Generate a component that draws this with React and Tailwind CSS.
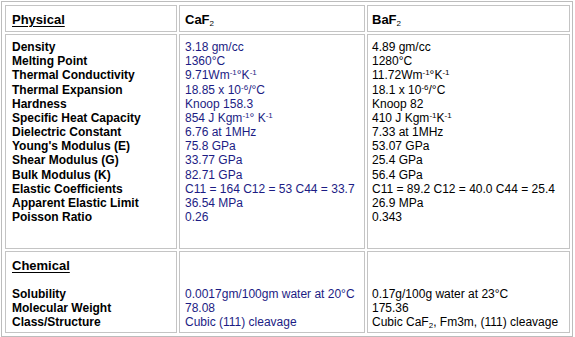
const LABELS = [
  'Density',
  'Melting Point',
  'Thermal Conductivity',
  'Thermal Expansion',
  'Hardness',
  'Specific Heat Capacity',
  'Dielectric Constant',
  "Young's Modulus (E)",
  'Shear Modulus (G)',
  'Bulk Modulus (K)',
  'Elastic Coefficients',
  'Apparent Elastic Limit',
  'Poisson Ratio',
];

const Sup = ({ children }) => <sup className="text-[8px]">{children}</sup>;

const CAF2 = [
  '3.18 gm/cc',
  '1360°C',
  <>9.71Wm<Sup>-1</Sup>°K<Sup>-1</Sup></>,
  <>18.85 x 10<Sup>-6</Sup>/°C</>,
  'Knoop 158.3',
  <>854 J Kgm<Sup>-1</Sup>° K<Sup>-1</Sup></>,
  '6.76 at 1MHz',
  '75.8 GPa',
  '33.77 GPa',
  '82.71 GPa',
  'C11 = 164 C12 = 53 C44 = 33.7',
  '36.54 MPa',
  '0.26',
];

const BAF2 = [
  '4.89 gm/cc',
  '1280°C',
  <>11.72Wm<Sup>-1</Sup>°K<Sup>-1</Sup></>,
  <>18.1 x 10<Sup>-6</Sup>/°C</>,
  'Knoop 82',
  <>410 J Kgm<Sup>-1</Sup>K<Sup>-1</Sup></>,
  '7.33 at 1MHz',
  '53.07 GPa',
  '25.4 GPa',
  '56.4 GPa',
  'C11 = 89.2 C12 = 40.0 C44 = 25.4',
  '26.9 MPa',
  '0.343',
];

const cell = 'border border-[#c4c4c4] bg-white';

export default function App() {
  return (
    <div className="w-[575px] h-[337px] bg-white pt-[1px] pl-[1px] text-[12px] leading-[14px] text-black" style={{ fontFamily: '"Liberation Sans", Arial, sans-serif' }}>
      <div className="w-[572px] h-[336px] border border-[#bcbcbc] p-[3px] grid grid-cols-[172px_186px_203px] grid-rows-[27px_215px_82px] gap-[2px]">
        {/* Header row */}
        <div className={`${cell} pl-[6px] pt-[6px] text-[13px] leading-[15px] font-bold`}>
          <span className="underline underline-offset-[2px]">Physical</span>
        </div>
        <div className={`${cell} pl-[5px] pt-[6px] text-[13px] leading-[15px] font-bold`}>
          CaF<sub className="text-[8px] font-normal">2</sub>
        </div>
        <div className={`${cell} pl-[4px] pt-[6px] text-[13px] leading-[15px] font-bold`}>
          BaF<sub className="text-[8px] font-normal">2</sub>
        </div>

        {/* Physical data */}
        <div className={`${cell} pl-[6px] pt-[5px] font-bold leading-[14.17px]`}>
          {LABELS.map((l) => (
            <div key={l}>{l}</div>
          ))}
        </div>
        <div className={`${cell} pl-[5px] pt-[5px] text-[#1c1c84] leading-[14.17px]`}>
          {CAF2.map((v, i) => (
            <div key={i}>{v}</div>
          ))}
        </div>
        <div className={`${cell} pl-[4px] pt-[5px] leading-[14.17px]`}>
          {BAF2.map((v, i) => (
            <div key={i}>{v}</div>
          ))}
        </div>

        {/* Chemical */}
        <div className={`${cell} pl-[6px] pt-[6px] font-bold`}>
          <div className="text-[13px] leading-[15px] underline underline-offset-[2px]">Chemical</div>
          <div className="h-[14px]" />
          <div>Solubility</div>
          <div>Molecular Weight</div>
          <div>Class/Structure</div>
        </div>
        <div className={`${cell} pl-[5px] pt-[35px] text-[#1c1c84]`}>
          <div>0.0017gm/100gm water at 20°C</div>
          <div>78.08</div>
          <div>Cubic (111) cleavage</div>
        </div>
        <div className={`${cell} pl-[4px] pt-[35px]`}>
          <div>0.17g/100g water at 23°C</div>
          <div>175.36</div>
          <div>Cubic CaF<sub className="text-[8px]">2</sub>, Fm3m, (111) cleavage</div>
        </div>
      </div>
    </div>
  );
}
